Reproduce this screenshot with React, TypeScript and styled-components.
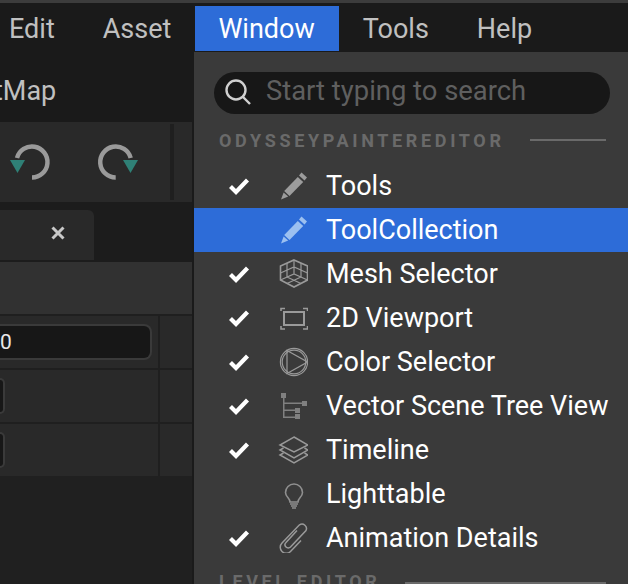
import React from "react";
import styled, { createGlobalStyle } from "styled-components";

const Global = createGlobalStyle`
  html, body { margin: 0; padding: 0; background: #1a1a1a; }
  body { font-family: Roboto, "Liberation Sans", sans-serif; }
`;
const Screen = styled.div`
  position: relative; width: 628px; height: 584px; overflow: hidden;
  display: flex; flex-direction: column; background: #1a1a1a;
  border-top: 3px solid #3c3c3c; box-sizing: border-box;
`;
const MenuBar = styled.div`
  display: flex; height: 48px; padding: 3px 0 0 0; box-sizing: border-box; flex: none; background: #1a1a1a;
`;
const MenuItem = styled.div<{ $active?: boolean; $first?: boolean }>`
  height: 45px; line-height: 47px;
  padding: 0 24px 0 ${p => (p.$first ? "9px" : p.$active ? "23px" : "24px")};
  font-size: 27px; color: ${p => (p.$active ? "#fff" : "#c0c0c0")};
  background: ${p => (p.$active ? "#2d6cd8" : "transparent")};
`;
const TitleRow = styled.div`
  height: 71px; flex: none; font-size: 27px; color: #c0c0c0; line-height: 80px; margin-left: -6px; white-space: nowrap;
`;
const Toolbar = styled.div`
  height: 80px; flex: none; background: #292929; display: flex; align-items: center; padding-left: 8px; gap: 32px;
`;
const ToolGroup = styled.div`
  display: flex; gap: 42px;
  svg { display: block; }
`;
const ToolDivider = styled.div`
  width: 4px; height: 76px; background: #1f1f1f;
`;
const TabStrip = styled.div`
  height: 60px; flex: none; background: #1c1c1c; box-sizing: border-box; padding-top: 8px; display: flex;
`;
const Tab = styled.div`
  width: 94px; height: 50px; background: #292929; border-top-right-radius: 6px; display: flex; align-items: center; justify-content: flex-end;
  padding: 0 29px 4px 0; box-sizing: border-box;
`;
const TableHead = styled.div`
  height: 52px; flex: none; background: #313131;
`;
const Row = styled.div`
  height: 52px; flex: none; display: grid; grid-template-columns: 158px 1fr; background: #292929; border-top: 2px solid #1f1f1f;
`;
const Cell = styled.div`
  display: flex; align-items: center; overflow: hidden;
`;
const ValueCell = styled(Cell)`
  border-left: 2px solid #1f1f1f;
`;
const Field = styled.div<{ $wide?: boolean }>`
  box-sizing: border-box; width: ${p => (p.$wide ? "152px" : "5px")}; height: 36px; background: #171717;
  border: 2px solid #3a3a3a; border-left: 0; border-radius: 0 8px 8px 0; color: #e8e8e8; font-size: 21px; line-height: 33px;
`;
const BottomFill = styled.div`
  flex: 1; background: #202020;
`;
const Popup = styled.div`
  position: absolute; left: 192px; top: 48px; width: 436px; height: 540px; box-sizing: border-box;
  background: #3a3a3a; border-left: 2px solid #1a1a1a; border-top: 1px solid #1a1a1a; padding-top: 20px;
`;
const Search = styled.div`
  margin: 0 18px 0 20px; height: 42px; border-radius: 21px; background: #171717; display: flex; align-items: center;
  padding-left: 10px; gap: 14px; color: #5f5f5f; font-size: 27.4px;
  svg { flex: none; margin-top: -2px; }
`;
const SearchHint = styled.span`
  margin-bottom: 5px; white-space: nowrap;
`;
const Section = styled.div<{ $clip?: boolean }>`
  display: flex; align-items: center; gap: 25px; height: 22px; margin: ${p => (p.$clip ? "10px 22px 0 25px" : "15px 22px 0 25px")};
  color: #6a6a6a; font-size: 18px; font-weight: 700; letter-spacing: 3.65px; white-space: nowrap;
`;
const SectionRule = styled.div<{ $low?: boolean }>`
  flex: 1; height: 2px; background: #6a6a6a; margin-top: ${p => (p.$low ? "3px" : "0")};
`;
const Items = styled.div`
  margin-top: 13px;
`;
const Item = styled.div<{ $hl?: boolean }>`
  height: 44px; display: flex; align-items: center; font-size: 27px; color: #fff; white-space: nowrap;
  background: ${p => (p.$hl ? "#2d6cd8" : "transparent")};
`;
const CheckSlot = styled.div`
  width: 84px; display: flex; justify-content: center; padding-left: 6px; box-sizing: border-box; flex: none;
  svg { display: block; }
`;
const IconSlot = styled.div`
  width: 30px; height: 30px; margin-right: 18px; flex: none;
  svg { display: block; }
`;
const Check = () => (
  <svg width="22" height="18" viewBox="0 0 22 18"><path d="M2.5 9.5 L8 15 L19.5 3" fill="none" stroke="#fff" strokeWidth="4.2" /></svg>
);
const Ic: React.FC<{ children: React.ReactNode; c?: string }> = ({ children, c = "#9a9a9a" }) => (
  <svg width="30" height="30" viewBox="0 0 30 30" fill="none" stroke={c} strokeWidth="1.6">{children}</svg>
);
const Pencil = ({ c = "#9c9c9c" }: { c?: string }) => (
  <svg width="30" height="30" viewBox="0 0 30 30">
    <path d="M23.5 1.5 L29 6.5 L26.5 9.5 L21 4.5Z" fill={c} />
    <path d="M19.8 6 L25.2 10.9 L11.5 25 L6.2 20Z" fill={c} />
    <path d="M5.6 21.4 L10.2 25.6 L3 28.5Z" fill={c} />
  </svg>
);
const icons: Record<string, React.ReactNode> = {
  mesh: <Ic>
    <path d="M16 1 L29.5 7 V21 L16 28 L2.5 21 V7Z" />
    <path d="M16 1 V15 M2.5 21 L16 15 L29.5 21 M9 4 V18 M23 4 V18 M2.5 14 L16 8 L29.5 14 M9 18 L23 24.5 M23 18 L9 24.5" strokeWidth="1.2" />
  </Ic>,
  view: <Ic>
    <rect x="6" y="9" width="20" height="13" strokeWidth="2" />
    <path d="M3 8 V5.5 H7 M25 5.5 H29.5 V8 M3 23 V26 H7 M25 26 H29.5 V23" />
  </Ic>,
  color: <Ic>
    <circle cx="16" cy="15" r="13.6" strokeWidth="1.2" /><circle cx="16" cy="15" r="11.8" strokeWidth="1.2" />
    <path d="M9 3.5 V26.5 L29.5 15Z" strokeWidth="1.2" />
  </Ic>,
  tree: <svg width="30" height="30" viewBox="0 0 30 30" fill="#808080" stroke="none">
    <rect x="3" y="2" width="5" height="5" /><rect x="24" y="10" width="5" height="5" /><rect x="17" y="17" width="5" height="5" /><rect x="17" y="23" width="5" height="5" />
    <path d="M5 7h1.5v18.5H17v1.5H5z M6 11.5H24V13H6z M6 18.5H17V20H6z" />
  </svg>,
  layers: <Ic>
    <path d="M16 2 L30 10 L16 17 L2 10Z" strokeWidth="1.5" />
    <path d="M5.5 13 L2 15 L16 23 L30 15 L26.5 13" strokeWidth="1.5" />
    <path d="M5.5 18 L2 20 L16 28 L30 20 L26.5 18" strokeWidth="1.5" />
  </Ic>,
  bulb: <Ic c="#8f8f8f">
    <path d="M12 23 C12 19 7.5 18 7.5 13.5 A8.5 8.5 0 0 1 24.5 13.5 C24.5 18 20 19 20 23Z" />
    <path d="M12 25 H20 M13 27 H19 M14 29 H18" strokeWidth="1.4" />
  </Ic>,
  clip: <Ic>
    <path d="M19 7.5 L8 19.5 A3 3 0 0 0 12.5 24 L28 7.5 A4.5 4.5 0 0 0 21.5 1.8 L4 20 A6 6 0 0 0 12.5 28.5 L23 17.5" strokeWidth="1.5" />
  </Ic>,
};
const rows = [
  { label: "Tools", check: true, icon: <Pencil /> },
  { label: "ToolCollection", hl: true, icon: <Pencil c="#9cc0f0" /> },
  { label: "Mesh Selector", check: true, icon: icons.mesh },
  { label: "2D Viewport", check: true, icon: icons.view },
  { label: "Color Selector", check: true, icon: icons.color },
  { label: "Vector Scene Tree View", check: true, icon: icons.tree },
  { label: "Timeline", check: true, icon: icons.layers },
  { label: "Lighttable", icon: icons.bulb },
  { label: "Animation Details", check: true, icon: icons.clip },
];
export default function App() {
  return (
    <Screen>
      <Global />
      <MenuBar>
        <MenuItem $first>Edit</MenuItem>
        <MenuItem>Asset</MenuItem>
        <MenuItem $active>Window</MenuItem>
        <MenuItem>Tools</MenuItem>
        <MenuItem>Help</MenuItem>
      </MenuBar>
      <TitleRow>tMap</TitleRow>
      <Toolbar>
        <ToolGroup>
          <svg width="44" height="44" viewBox="0 0 44 44">
            <path d="M9 18 A15.5 15.5 0 1 1 24 37.5" fill="none" stroke="#9a9a9a" strokeWidth="4.5" />
            <path d="M2 20 H17 L9.5 33Z" fill="#2f8076" />
          </svg>
          <svg width="44" height="44" viewBox="0 0 44 44">
            <path d="M36.7 18 A15.5 15.5 0 1 0 21.7 37.5" fill="none" stroke="#9a9a9a" strokeWidth="4.5" />
            <path d="M29 20 H44 L36.5 33Z" fill="#2f8076" />
          </svg>
        </ToolGroup>
        <ToolDivider />
      </Toolbar>
      <TabStrip>
        <Tab>
          <svg width="14" height="14" viewBox="0 0 14 14"><path d="M1.5 1.5 L12.5 12.5 M12.5 1.5 L1.5 12.5" stroke="#c8c8c8" strokeWidth="3" /></svg>
        </Tab>
      </TabStrip>
      <TableHead />
      <Row><Cell><Field $wide>0</Field></Cell><ValueCell /></Row>
      <Row><Cell><Field /></Cell><ValueCell /></Row>
      <Row><Cell><Field /></Cell><ValueCell /></Row>
      <BottomFill />
      <Popup>
        <Search>
          <svg width="28" height="28" viewBox="0 0 28 28" fill="none" stroke="#d0d0d0" strokeWidth="2.4">
            <circle cx="12" cy="12" r="9.5" /><path d="M19 19 L26 26" />
          </svg>
          <SearchHint>Start typing to search</SearchHint>
        </Search>
        <Section>ODYSSEYPAINTEREDITOR<SectionRule /></Section>
        <Items>
          {rows.map(r => (
            <Item key={r.label} $hl={r.hl}>
              <CheckSlot>{r.check && <Check />}</CheckSlot>
              <IconSlot>{r.icon}</IconSlot>
              {r.label}
            </Item>
          ))}
        </Items>
        <Section $clip>LEVEL EDITOR<SectionRule $low /></Section>
      </Popup>
    </Screen>
  );
}
